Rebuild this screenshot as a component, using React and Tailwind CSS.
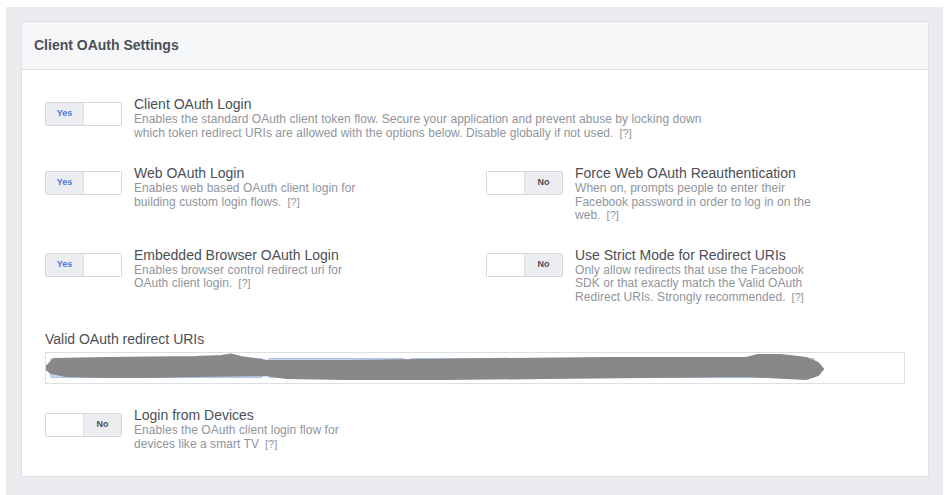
import React from "react";

const font = { fontFamily: '"Liberation Sans", Arial, Helvetica, sans-serif' };

function Toggle({ on }) {
  return (
    <div className="mt-[6px] flex h-[24px] w-[77px] shrink-0 overflow-hidden rounded-[2px] border border-[#d3d6db] bg-white">
      {on ? (
        <>
          <div className="flex w-[38px] items-center justify-center border-r border-[#dddfe2] bg-[#ebedf0] text-[9px] font-bold text-[#4e76dc]">
            Yes
          </div>
          <div className="flex-1 bg-white" />
        </>
      ) : (
        <>
          <div className="w-[38px] border-r border-[#dddfe2] bg-white" />
          <div className="flex flex-1 items-center justify-center bg-[#ebedf0] text-[9px] font-bold text-[#4b4f56]">
            No
          </div>
        </>
      )}
    </div>
  );
}

function Help() {
  return <span className="ml-[6px] text-[11px] text-[#90949c]">[?]</span>;
}

function Setting({ on, title, children, width = "w-[242px]" }) {
  return (
    <div className="flex items-start">
      <Toggle on={on} />
      <div className={`ml-[12px] ${width}`}>
        <div className="text-[14px] leading-[17px] text-[#4b4f56]">{title}</div>
        <div className="text-[12px] leading-[13.5px] tracking-[0.05px] text-[#90949c]">{children}</div>
      </div>
    </div>
  );
}

function Scribble() {
  return (
    <svg
      className="pointer-events-none absolute left-0 top-0"
      width="860"
      height="32"
      viewBox="0 0 860 32"
    >
      <path
        d="M-1 15 L8 6 L60 5 L150 4 L175 3 L185 1.5 L195 4 L222 8 L300 8 L450 6 L560 5 L700 5 L712 2 L735 2 L760 5 L772 10 L777 16 L772 22 L760 26 L740 25 L700 23 L600 24 L500 25 L400 26 L300 26 L240 25 L220 22 L150 23 L100 24 L60 24 L20 23 L5 20 Z"
        fill="#888888"
        stroke="#888888"
        strokeWidth="2"
        strokeLinejoin="round"
      />
    </svg>
  );
}

function Chip({ w }) {
  return <div className={`h-[20px] ${w} shrink-0 rounded-[2px] border border-[#aec4e6] bg-[#c6d6ef]`} />;
}

export default function App() {
  return (
    <div className="h-[495px] w-[949px] bg-white pl-[6px] pr-[6px] pt-[7px]" style={font}>
      <div className="h-full bg-[#e9ebee] pl-[15px] pr-[14px] pt-[14px]">
        <div className="h-[456px] w-[908px] border border-[#dddfe2] bg-white">
          <div className="flex h-[48px] items-center border-b border-[#dddfe2] bg-[#f6f7f9] px-[12px] text-[14px] font-bold text-[#4b4f56]">
            Client OAuth Settings
          </div>
          <div className="pl-[23px] pt-[26px]">
            <Setting on title="Client OAuth Login" width="w-[582px]">
              Enables the standard OAuth client token flow. Secure your application and prevent abuse by locking down which token redirect URIs are allowed with the options below. Disable globally if not used.
              <Help />
            </Setting>

            <div className="mt-[25px] grid grid-cols-[441px_1fr] gap-y-[24px]">
              <Setting on title="Web OAuth Login">
                Enables web based OAuth client login for building custom login flows.
                <Help />
              </Setting>
              <Setting on={false} title="Force Web OAuth Reauthentication">
                When on, prompts people to enter their Facebook password in order to log in on the web.
                <Help />
              </Setting>
              <Setting on title="Embedded Browser OAuth Login">
                Enables browser control redirect uri for OAuth client login.
                <Help />
              </Setting>
              <Setting on={false} title="Use Strict Mode for Redirect URIs">
                Only allow redirects that use the Facebook SDK or that exactly match the Valid OAuth Redirect URIs. Strongly recommended.
                <Help />
              </Setting>
            </div>

            <div className="mt-[27px] text-[14px] leading-[17px] text-[#4b4f56]">Valid OAuth redirect URIs</div>
            <div className="relative mt-[4px] flex h-[32px] w-[860px] items-center gap-[5px] border border-[#dddfe2] bg-white pl-[4px]">
              <Chip w="w-[213px]" />
              <Chip w="w-[137px]" />
              <Chip w="w-[135px]" />
              <Chip w="w-[265px]" />
              <Scribble />
            </div>

            <div className="mt-[23px]">
              <Setting on={false} title="Login from Devices">
                Enables the OAuth client login flow for devices like a smart TV
                <Help />
              </Setting>
            </div>
          </div>
        </div>
      </div>
    </div>
  );
}
